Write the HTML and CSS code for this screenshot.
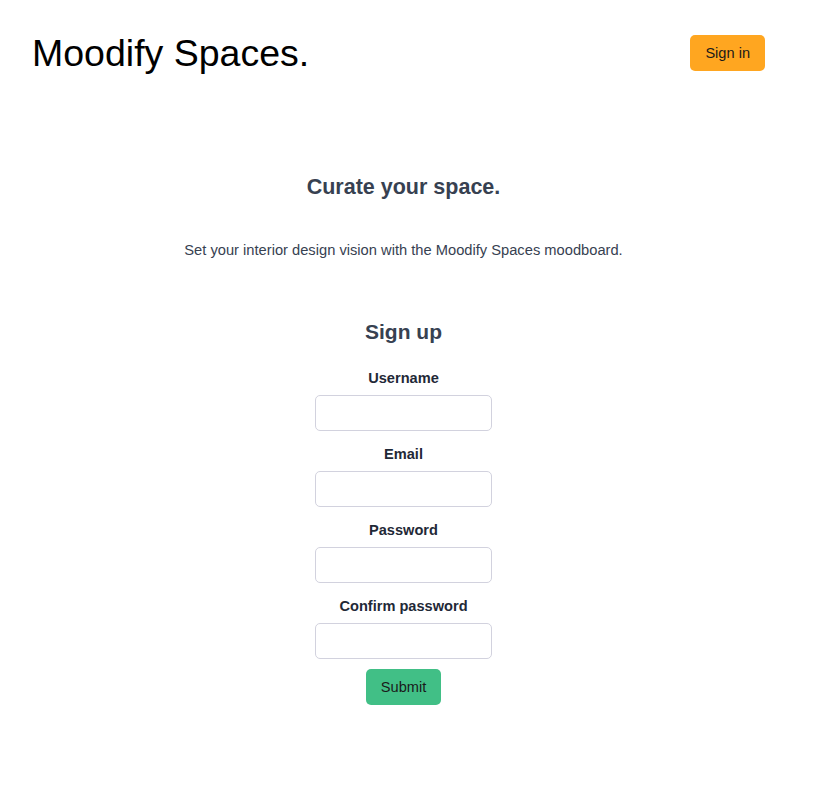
FILE: index.html
```html
<!DOCTYPE html>
<html lang="en">
<head>
<meta charset="utf-8">
<title>Moodify Spaces</title>
<link rel="stylesheet" href="styles.css">
</head>
<body>
<header class="header">
  <h1 class="brand">Moodify Spaces.</h1>
  <button class="btn btn-signin" type="button">Sign in</button>
</header>
<main class="main">
  <h2 class="headline">Curate your space.</h2>
  <p class="lead">Set your interior design vision with the Moodify Spaces moodboard.</p>
  <form class="form">
    <h3 class="form-title">Sign up</h3>
    <div class="field">
      <label class="label" for="username">Username</label>
      <input class="input" id="username" type="text">
    </div>
    <div class="field">
      <label class="label" for="email">Email</label>
      <input class="input" id="email" type="email">
    </div>
    <div class="field">
      <label class="label" for="password">Password</label>
      <input class="input" id="password" type="password">
    </div>
    <div class="field">
      <label class="label" for="confirm">Confirm password</label>
      <input class="input" id="confirm" type="password">
    </div>
    <button class="btn btn-submit" type="submit">Submit</button>
  </form>
</main>
</body>
</html>
```
FILE: styles.css
```css
* { box-sizing: border-box; }
html, body { margin: 0; padding: 0; background: #ffffff; }
body {
  font-family: "Liberation Sans", Arial, Helvetica, sans-serif;
  color: #1f2937;
}
.header {
  display: flex;
  align-items: center;
  justify-content: space-between;
  padding: 31px 58px 0 32px;
}
.brand {
  margin: 0;
  font-size: 37.5px;
  line-height: 44px;
  font-weight: 400;
  color: #000;
}
.btn {
  font-family: inherit;
  font-size: 14.6px;
  font-weight: 500;
  color: #1a1a1a;
  height: 36px;
  padding: 0 15px;
  border: none;
  border-radius: 5px;
  cursor: pointer;
}
.btn-signin { background: #ffa620; }
.btn-submit { background: #41bf86; margin-top: 10px; }
.main {
  display: flex;
  flex-direction: column;
  align-items: center;
  padding: 99px 16px 0 0;
}
.headline {
  margin: 0;
  font-size: 21.5px;
  line-height: 26px;
  font-weight: 700;
  color: #374151;
}
.lead {
  margin: 40px 0 0;
  font-size: 14.7px;
  line-height: 20px;
  color: #374151;
}
.form {
  margin-top: 60px;
  display: flex;
  flex-direction: column;
  align-items: center;
}
.form-title {
  margin: 0 0 24px;
  font-size: 21px;
  line-height: 24px;
  font-weight: 700;
  color: #374151;
}
.field {
  display: flex;
  flex-direction: column;
  align-items: center;
  gap: 7px;
}
.field + .field { margin-top: 13px; }
.label {
  font-size: 14.6px;
  line-height: 20px;
  font-weight: 700;
  color: #1f2937;
}
.input {
  width: 177px;
  height: 36px;
  border: 1px solid #d2d2de;
  border-radius: 5px;
  padding: 0 8px;
  font-family: inherit;
  font-size: 14px;
  background: #fff;
}
```
